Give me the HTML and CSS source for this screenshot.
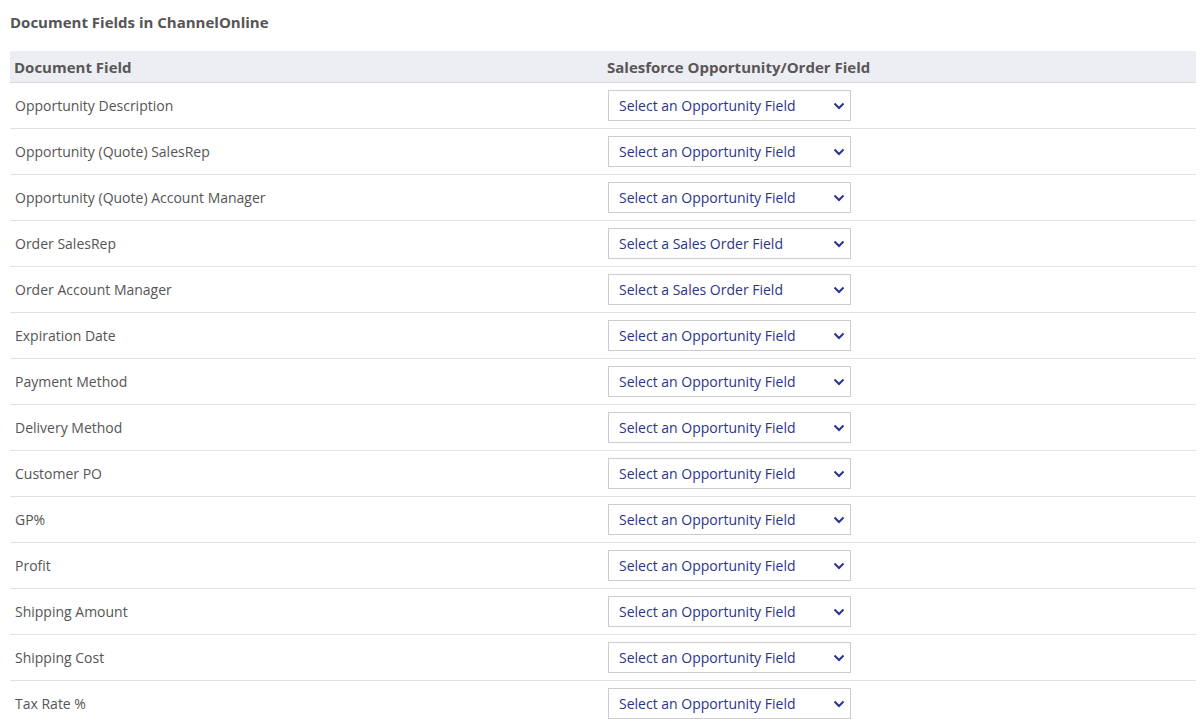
FILE: index.html
```html
<!DOCTYPE html>
<html>
<head>
<meta charset="utf-8">
<link rel="stylesheet" href="styles.css">
</head>
<body>
<div class="page">
  <h2 class="title">Document Fields in ChannelOnline</h2>
  <table class="map">
    <thead>
      <tr><th class="c1">Document Field</th><th class="c2">Salesforce Opportunity/Order Field</th></tr>
    </thead>
    <tbody>
      <tr><td>Opportunity Description</td><td><div class="sel"><span>Select an Opportunity Field</span><svg viewBox="0 0 12 8" class="chev"><path d="M1.5 1.5 L6 6 L10.5 1.5"/></svg></div></td></tr>
      <tr><td>Opportunity (Quote) SalesRep</td><td><div class="sel"><span>Select an Opportunity Field</span><svg viewBox="0 0 12 8" class="chev"><path d="M1.5 1.5 L6 6 L10.5 1.5"/></svg></div></td></tr>
      <tr><td>Opportunity (Quote) Account Manager</td><td><div class="sel"><span>Select an Opportunity Field</span><svg viewBox="0 0 12 8" class="chev"><path d="M1.5 1.5 L6 6 L10.5 1.5"/></svg></div></td></tr>
      <tr><td>Order SalesRep</td><td><div class="sel"><span>Select a Sales Order Field</span><svg viewBox="0 0 12 8" class="chev"><path d="M1.5 1.5 L6 6 L10.5 1.5"/></svg></div></td></tr>
      <tr><td>Order Account Manager</td><td><div class="sel"><span>Select a Sales Order Field</span><svg viewBox="0 0 12 8" class="chev"><path d="M1.5 1.5 L6 6 L10.5 1.5"/></svg></div></td></tr>
      <tr><td>Expiration Date</td><td><div class="sel"><span>Select an Opportunity Field</span><svg viewBox="0 0 12 8" class="chev"><path d="M1.5 1.5 L6 6 L10.5 1.5"/></svg></div></td></tr>
      <tr><td>Payment Method</td><td><div class="sel"><span>Select an Opportunity Field</span><svg viewBox="0 0 12 8" class="chev"><path d="M1.5 1.5 L6 6 L10.5 1.5"/></svg></div></td></tr>
      <tr><td>Delivery Method</td><td><div class="sel"><span>Select an Opportunity Field</span><svg viewBox="0 0 12 8" class="chev"><path d="M1.5 1.5 L6 6 L10.5 1.5"/></svg></div></td></tr>
      <tr><td>Customer PO</td><td><div class="sel"><span>Select an Opportunity Field</span><svg viewBox="0 0 12 8" class="chev"><path d="M1.5 1.5 L6 6 L10.5 1.5"/></svg></div></td></tr>
      <tr><td>GP%</td><td><div class="sel"><span>Select an Opportunity Field</span><svg viewBox="0 0 12 8" class="chev"><path d="M1.5 1.5 L6 6 L10.5 1.5"/></svg></div></td></tr>
      <tr><td>Profit</td><td><div class="sel"><span>Select an Opportunity Field</span><svg viewBox="0 0 12 8" class="chev"><path d="M1.5 1.5 L6 6 L10.5 1.5"/></svg></div></td></tr>
      <tr><td>Shipping Amount</td><td><div class="sel"><span>Select an Opportunity Field</span><svg viewBox="0 0 12 8" class="chev"><path d="M1.5 1.5 L6 6 L10.5 1.5"/></svg></div></td></tr>
      <tr><td>Shipping Cost</td><td><div class="sel"><span>Select an Opportunity Field</span><svg viewBox="0 0 12 8" class="chev"><path d="M1.5 1.5 L6 6 L10.5 1.5"/></svg></div></td></tr>
      <tr><td>Tax Rate %</td><td><div class="sel"><span>Select an Opportunity Field</span><svg viewBox="0 0 12 8" class="chev"><path d="M1.5 1.5 L6 6 L10.5 1.5"/></svg></div></td></tr>
    </tbody>
  </table>
</div>
</body>
</html>
```

FILE: styles.css
```css
html, body {
  margin: 0;
  padding: 0;
  background: #ffffff;
}
body {
  font-family: "Open Sans", "Liberation Sans", Arial, sans-serif;
  font-size: 14px;
  color: #555555;
}
.page {
  padding: 0 7px 0 10px;
}
.title {
  margin: 0;
  padding-top: 12px;
  height: 51px;
  box-sizing: border-box;
  font-size: 15px;
  font-weight: bold;
  color: #555555;
  line-height: 20px;
}
.map {
  width: 100%;
  border-collapse: collapse;
  table-layout: fixed;
}
.map th {
  background: #eceef3;
  text-align: left;
  font-weight: bold;
  font-size: 15px;
  color: #5a5656;
  height: 31px;
  padding: 0 4px;
  border-bottom: 1px solid #dcdcdc;
  vertical-align: middle;
}
.map th.c1 { width: 585px; }
.map td {
  height: 45px;
  padding: 0 5px;
  border-bottom: 1px solid #e2e2e2;
  vertical-align: middle;
}
.sel {
  width: 243px;
  height: 31px;
  box-sizing: border-box;
  border: 1px solid #cccccc;
  background: #ffffff;
  display: flex;
  align-items: center;
  justify-content: space-between;
  padding: 0 5px 0 10px;
  color: #2b3588;
  font-size: 14px;
}
.chev {
  width: 12px;
  height: 8px;
  fill: none;
  stroke: #2b3588;
  stroke-width: 2;
}
```
